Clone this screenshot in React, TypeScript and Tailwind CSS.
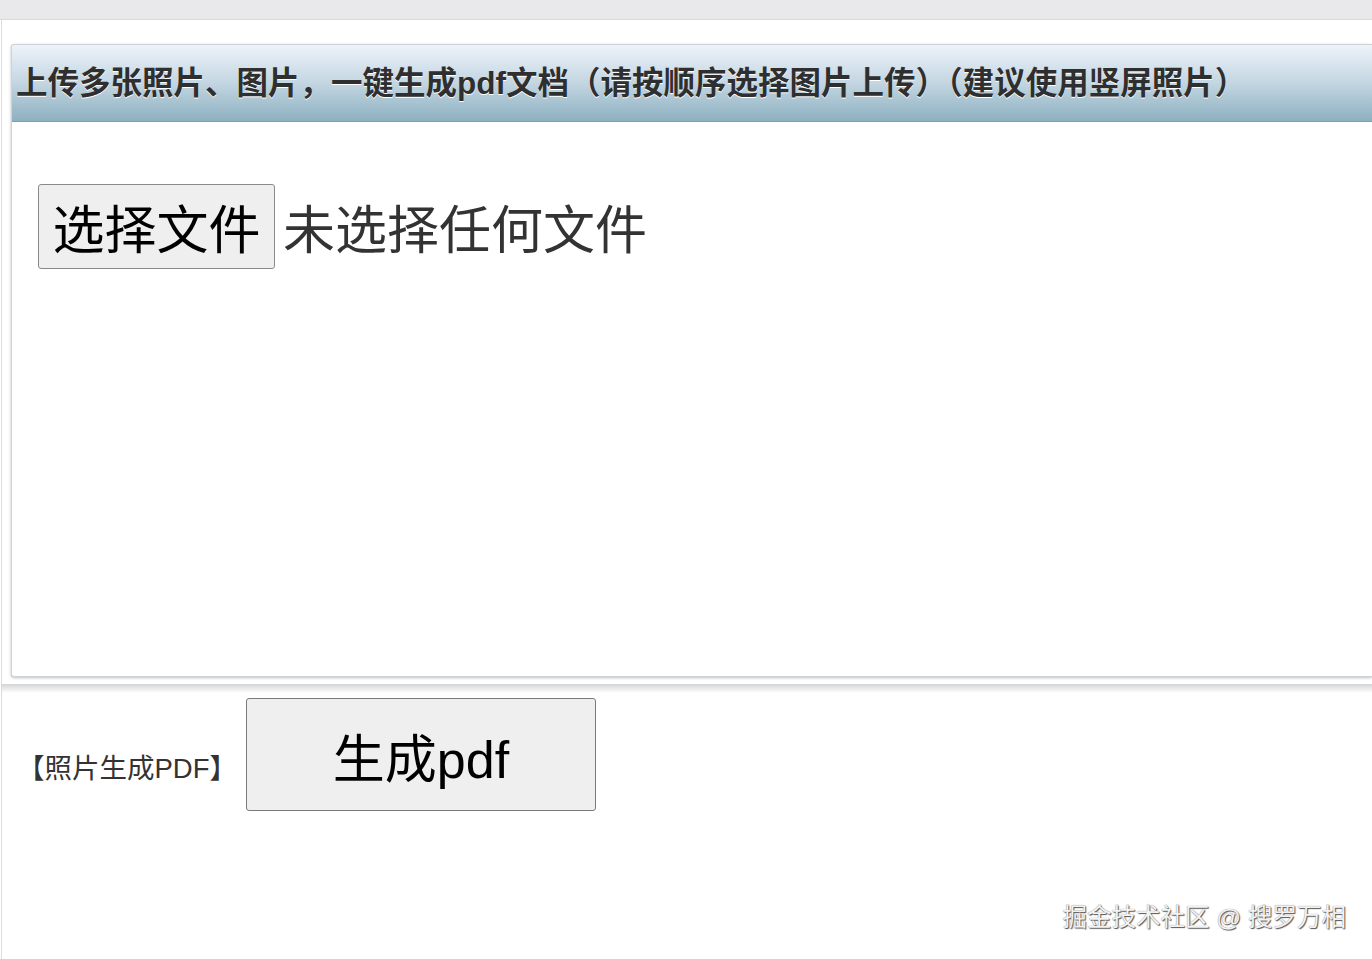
import React from 'react';

const fontStack = { fontFamily: '"Liberation Sans", "Noto Sans CJK SC", sans-serif' };

export default function App() {
  return (
    <div className="relative min-h-[959px] bg-white text-[#333]" style={fontStack}>
      {/* top strip */}
      <div className="h-[20px] bg-[#e9e9eb] border-b border-[#d9d9db]" />

      <div className="ml-px border-l border-[#dcdcdc] min-h-[939px]">
        {/* upload panel */}
        <div className="pt-[24px] pl-[9px]">
          <div className="h-[633px] border border-r-0 border-[#cdd2d6] rounded-l-[3px] bg-white shadow-[0_1px_3px_rgba(0,0,0,0.25)] overflow-hidden">
            <div className="h-[77px] flex items-center pl-[4px] bg-gradient-to-b from-[#edf3f9] via-[#c3d6e2] to-[#8db0c1] border-b border-[#7da2b3]">
              <h1 className="pt-[2px] text-[31.5px] font-bold text-[#2f2f2f] whitespace-nowrap [text-shadow:0_1px_0_#ffffff]">
                上传多张照片、图片，一键生成pdf文档（请按顺序选择图片上传）（建议使用竖屏照片）
              </h1>
            </div>

            <div className="pt-[62px] pl-[26px] flex items-center">
              <button
                type="button"
                className="w-[237px] h-[85px] pt-[8px] flex items-center justify-center bg-[#efefef] border border-[#8a8a8a] rounded-[3px] text-[52px] text-black leading-none"
              >
                选择文件
              </button>
              <span className="ml-[8px] mt-[9px] text-[52px] text-[#333] leading-none">未选择任何文件</span>
            </div>
          </div>
        </div>

        {/* generate row */}
        <div className="mt-[7px] h-[9px] bg-gradient-to-b from-[#d4d4d4] to-white" />
        <div className="pt-[5px] pl-[15px] flex items-baseline">
          <span className="text-[27.5px] text-[#333]">【照片生成PDF】</span>
          <button
            type="button"
            className="ml-[9px] w-[350px] h-[113px] pt-[10px] flex items-center justify-center bg-[#efefef] border border-[#7a7a7a] rounded-[3px] text-[52px] text-black"
          >
            生成pdf
          </button>
        </div>
      </div>

      {/* watermark */}
      <div className="absolute right-[26px] bottom-[22px] text-[24.5px] text-[#f2f2f2] [text-shadow:1px_1px_1px_#555,0_0_1px_#777] whitespace-nowrap">
        掘金技术社区 @ 搜罗万相
      </div>
    </div>
  );
}
